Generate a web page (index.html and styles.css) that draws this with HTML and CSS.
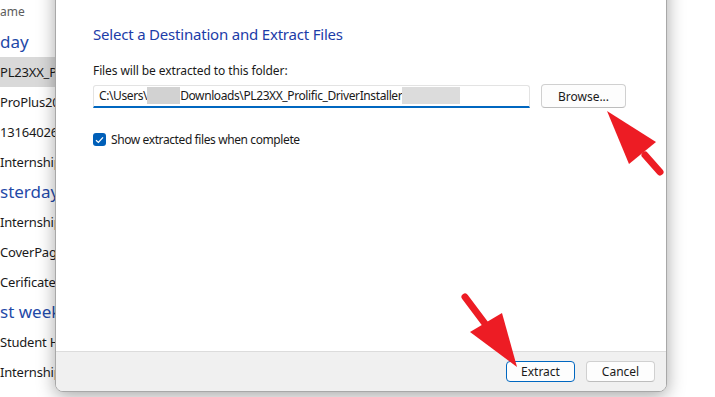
FILE: index.html
```html
<!DOCTYPE html>
<html lang="en">
<head>
    <meta charset="UTF-8">
    <meta name="viewport" content="width=device-width, initial-scale=1.0">
    <title>Extract Compressed (Zipped) Folders</title>
    <link rel="stylesheet" href="styles.css">
</head>
<body>
    <div class="desktop">
        <!-- Explorer window behind the dialog -->
        <aside class="explorer">
            <div class="col-head">ame</div>
            <div class="group">day</div>
            <div class="file selected">PL23XX_Pr</div>
            <div class="file">ProPlus202</div>
            <div class="file">13164026_N</div>
            <div class="file">Internship-</div>
            <div class="group">sterday</div>
            <div class="file">Internship_</div>
            <div class="file">CoverPage</div>
            <div class="file">Cerificate_</div>
            <div class="group">st week</div>
            <div class="file">Student Ha</div>
            <div class="file">Internship_</div>
        </aside>

        <!-- Extract dialog -->
        <section class="dialog">
            <div class="dialog-body">
                <h1>Select a Destination and Extract Files</h1>
                <label class="field-label">Files will be extracted to this folder:</label>
                <div class="path-row">
                    <div class="path-input">
                        <span>C:\Users\</span><span class="redact redact-user"></span><span>Downloads\PL23XX_Prolific_DriverInstaller</span><span class="redact redact-ver"></span>
                    </div>
                    <button class="btn browse-btn">Browse...</button>
                </div>
                <div class="check-row">
                    <span class="checkbox">
                        <svg width="9" height="8" viewBox="0 0 9 8"><path d="M1 4.2 L3.4 6.4 L8 1.4" fill="none" stroke="#fff" stroke-width="1.3"/></svg>
                    </span>
                    <span>Show extracted files when complete</span>
                </div>
            </div>
            <div class="dialog-footer">
                <button class="btn primary">Extract</button>
                <button class="btn">Cancel</button>
            </div>
        </section>

        <div class="backdrop"></div>
    </div>

    <!-- Annotation arrows drawn over the screenshot -->
    <svg class="arrows" width="715" height="397" viewBox="0 0 715 397">
        <line x1="645" y1="155" x2="660" y2="172" stroke="#ed1c24" stroke-width="7" stroke-linecap="round"/>
        <polygon points="607,111 629,164 656,142" fill="#ed1c24"/>
        <line x1="465" y1="297" x2="486" y2="325" stroke="#ed1c24" stroke-width="7" stroke-linecap="round"/>
        <polygon points="517,367 470,332 502,313" fill="#ed1c24"/>
    </svg>
</body>
</html>
```

FILE: styles.css
```css
* {
    margin: 0;
    padding: 0;
    box-sizing: border-box;
}

body {
    width: 715px;
    height: 397px;
    overflow: hidden;
    background-color: #ffffff;
    font-family: "Noto Sans", "Open Sans", Arial, sans-serif;
    color: #1a1a1a;
    position: relative;
}

.desktop {
    display: flex;
    height: 397px;
}

/* Explorer list */
.explorer {
    width: 55px;
    flex-shrink: 0;
    overflow: hidden;
    white-space: nowrap;
    margin-top: -3px;
}

.explorer div {
    height: 30px;
    line-height: 30px;
}

.col-head {
    font-size: 12px;
    color: #5c5c5c;
}

.group {
    font-size: 17px;
    color: #1f4aa8;
}

.file {
    font-size: 13px;
    letter-spacing: -0.2px;
    color: #1a1a1a;
}

.file.selected {
    background-color: #d9d9d9;
}

/* Dialog */
.dialog {
    width: 612px;
    flex-shrink: 0;
    margin-top: -40px;
    height: 432px;
    background-color: #ffffff;
    border: 1px solid #a8a8a8;
    border-radius: 8px;
    box-shadow: 0 4px 18px rgba(0, 0, 0, 0.35);
    display: flex;
    flex-direction: column;
    overflow: hidden;
    position: relative;
    z-index: 1;
}

.dialog-body {
    flex: 1;
    padding: 62px 0 0 37px;
}

.dialog h1 {
    font-size: 15px;
    font-weight: normal;
    letter-spacing: -0.2px;
    color: #1c3ca8;
    line-height: 22px;
    margin-bottom: 18px;
}

.field-label {
    display: block;
    font-size: 12px;
    letter-spacing: -0.1px;
    line-height: 16px;
    margin-bottom: 5px;
}

.path-row {
    display: flex;
    align-items: center;
    gap: 11px;
}

.path-input {
    width: 437px;
    height: 23px;
    border: 1px solid #e3e3e3;
    border-bottom: 2px solid #0067c0;
    border-radius: 3px 3px 0 0;
    font-size: 12px;
    letter-spacing: -0.4px;
    line-height: 20px;
    padding-left: 5px;
    display: flex;
    align-items: center;
    white-space: nowrap;
    overflow: hidden;
}

.redact {
    display: inline-block;
    height: 17px;
    background-color: #d2d2d2;
}

.redact-user {
    width: 33px;
}

.redact-ver {
    width: 58px;
    background-color: #dcdcdc;
}

.btn {
    font-family: "Noto Sans", "Open Sans", Arial, sans-serif;
    font-size: 12px;
    color: #1a1a1a;
    background-color: #fdfdfd;
    border: 1px solid #d0d0d0;
    border-bottom-color: #bdbdbd;
    border-radius: 4px;
    height: 21px;
    width: 69px;
}

.browse-btn {
    width: 85px;
    height: 24px;
}

.check-row {
    display: flex;
    align-items: center;
    gap: 5px;
    margin-top: 23px;
    font-size: 12px;
    letter-spacing: -0.4px;
}

.checkbox {
    width: 13px;
    height: 13px;
    border-radius: 3px;
    background-color: #005fb8;
    display: flex;
    align-items: center;
    justify-content: center;
}

.dialog-footer {
    height: 40px;
    background-color: #f0f0f0;
    border-top: 1px solid #dcdcdc;
    display: flex;
    justify-content: flex-end;
    align-items: center;
    gap: 11px;
    padding-right: 11px;
}

.btn.primary {
    border: 1px solid #0067c0;
}

.backdrop {
    flex: 1;
}

.arrows {
    position: absolute;
    top: 0;
    left: 0;
    z-index: 2;
}
```
